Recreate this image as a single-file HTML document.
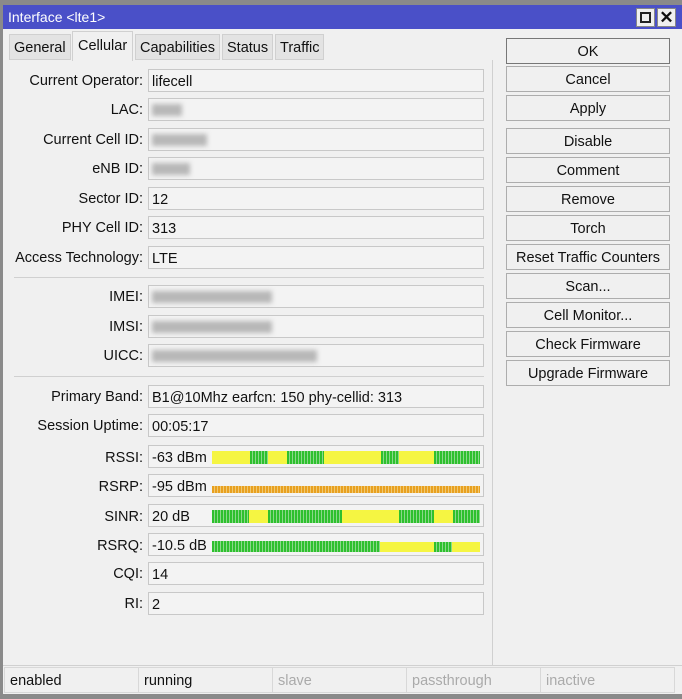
<!DOCTYPE html><html><head><style>
*{margin:0;padding:0;box-sizing:border-box}
body{width:682px;height:699px;background:#8a8a8a;font-family:"Liberation Sans",sans-serif;font-size:14.5px;color:#111;position:relative;overflow:hidden}
.a{position:absolute}
#win{left:3px;top:5px;width:679px;height:689px;background:#f0f0f0}
#title{left:3px;top:5px;width:679px;height:24px;background:#4a50c8;color:#fff;font-size:14px;padding:4px 0 0 5px}
.tb{top:8px;width:19px;height:19px;background:#f0f0f0;border:1px solid #888}
.tab{top:34px;height:26px;background:#e3e3e3;border:1px solid #d0d0d0;padding:5px 4px 0}
.lbl{width:143px;text-align:right;left:0;margin-top:1px}
.fld{left:148px;width:336px;height:23px;background:#f3f3f3;border:1px solid #c8c8c8;padding:4px 3px 0}
.blur{display:inline-block;width:60px;height:12px;margin-top:1px;background:#b8b8b8;filter:blur(2.5px)}
.sep{left:14px;width:470px;height:1px;background:#d0d0d0}
.btn{left:506px;width:164px;height:26px;background:#f0f0f0;border:1px solid #adadad;text-align:center;padding-top:5px}
.bar{position:absolute;top:5px;height:13px}
.g{background:repeating-linear-gradient(90deg,#2ec02e 0 2px,#8ad88a 2px 3px)}
.y{background:#f5f542}
.st{top:667px;height:26px;border:1px solid #d8d8d8;padding:5px 0 0 5px;width:135px}
</style></head><body>
<div id="win" class="a"></div>
<div id="title" class="a">Interface &lt;lte1&gt;</div>
<div class="a tb" style="left:636px"><div class="a" style="left:3px;top:3px;width:11px;height:11px;border:2px solid #222"></div></div>
<div class="a tb" style="left:657px;font-size:17px;font-weight:bold;text-align:center;line-height:17px">✕</div>

<div class="a tab" style="left:9px">General</div>
<div class="a" style="left:72px;top:31px;height:30px;background:#f0f0f0;border:1px solid #d0d0d0;border-bottom:none;padding:6px 5px 0">Cellular</div>
<div class="a tab" style="left:135px">Capabilities</div>
<div class="a tab" style="left:222px">Status</div>
<div class="a tab" style="left:275px">Traffic</div>
<div class="a" style="left:492px;top:60px;width:1px;height:605px;background:#d0d0d0"></div>

<div class="a lbl" style="top:72px">Current Operator:</div><div class="a fld" style="top:69px">lifecell</div>
<div class="a lbl" style="top:101px">LAC:</div><div class="a fld" style="top:98px"><span class="blur" style="width:30px"></span></div>
<div class="a lbl" style="top:131px">Current Cell ID:</div><div class="a fld" style="top:128px"><span class="blur" style="width:55px"></span></div>
<div class="a lbl" style="top:160px">eNB ID:</div><div class="a fld" style="top:157px"><span class="blur" style="width:38px"></span></div>
<div class="a lbl" style="top:190px">Sector ID:</div><div class="a fld" style="top:187px">12</div>
<div class="a lbl" style="top:219px">PHY Cell ID:</div><div class="a fld" style="top:216px">313</div>
<div class="a lbl" style="top:249px">Access Technology:</div><div class="a fld" style="top:246px">LTE</div>
<div class="a sep" style="top:277px"></div>
<div class="a lbl" style="top:288px">IMEI:</div><div class="a fld" style="top:285px"><span class="blur" style="width:120px"></span></div>
<div class="a lbl" style="top:318px">IMSI:</div><div class="a fld" style="top:315px"><span class="blur" style="width:120px"></span></div>
<div class="a lbl" style="top:347px">UICC:</div><div class="a fld" style="top:344px"><span class="blur" style="width:165px"></span></div>
<div class="a sep" style="top:376px"></div>
<div class="a lbl" style="top:388px">Primary Band:</div><div class="a fld" style="top:385px">B1@10Mhz earfcn: 150 phy-cellid: 313</div>
<div class="a lbl" style="top:417px">Session Uptime:</div><div class="a fld" style="top:414px">00:05:17</div>
<div class="a lbl" style="top:449px">RSSI:</div><div class="a fld" style="top:445px">-63 dBm
<div class="bar y" style="left:63px;width:38px"></div><div class="bar g" style="left:101px;width:18px"></div><div class="bar y" style="left:119px;width:19px"></div><div class="bar g" style="left:138px;width:37px"></div><div class="bar y" style="left:175px;width:57px"></div><div class="bar g" style="left:232px;width:18px"></div><div class="bar y" style="left:250px;width:35px"></div><div class="bar g" style="left:285px;width:46px"></div></div>
<div class="a lbl" style="top:478px">RSRP:</div><div class="a fld" style="top:474px">-95 dBm
<div class="bar" style="left:63px;width:268px;top:11px;height:7px;background:repeating-linear-gradient(90deg,#e8a020 0 2px,#f0c870 2px 3px)"></div></div>
<div class="a lbl" style="top:508px">SINR:</div><div class="a fld" style="top:504px">20 dB
<div class="bar g" style="left:63px;width:37px"></div><div class="bar y" style="left:100px;width:19px"></div><div class="bar g" style="left:119px;width:74px"></div><div class="bar y" style="left:193px;width:57px"></div><div class="bar g" style="left:250px;width:35px"></div><div class="bar y" style="left:285px;width:19px"></div><div class="bar g" style="left:304px;width:27px"></div></div>
<div class="a lbl" style="top:537px">RSRQ:</div><div class="a fld" style="top:533px">-10.5 dB
<div class="bar g" style="left:63px;width:168px;top:7px;height:11px"></div><div class="bar y" style="left:231px;width:54px;top:8px;height:10px"></div><div class="bar g" style="left:285px;width:18px;top:8px;height:10px"></div><div class="bar y" style="left:303px;width:28px;top:8px;height:10px"></div></div>
<div class="a lbl" style="top:565px">CQI:</div><div class="a fld" style="top:562px">14</div>
<div class="a lbl" style="top:595px">RI:</div><div class="a fld" style="top:592px">2</div>

<div class="a btn" style="top:38px;border-color:#777">OK</div>
<div class="a btn" style="top:66px">Cancel</div>
<div class="a btn" style="top:95px">Apply</div>
<div class="a btn" style="top:128px">Disable</div>
<div class="a btn" style="top:157px">Comment</div>
<div class="a btn" style="top:186px">Remove</div>
<div class="a btn" style="top:215px">Torch</div>
<div class="a btn" style="top:244px">Reset Traffic Counters</div>
<div class="a btn" style="top:273px">Scan...</div>
<div class="a btn" style="top:302px">Cell Monitor...</div>
<div class="a btn" style="top:331px">Check Firmware</div>
<div class="a btn" style="top:360px">Upgrade Firmware</div>

<div class="a" style="left:3px;top:665px;width:679px;height:1px;background:#d0d0d0"></div>
<div class="a st" style="left:4px">enabled</div>
<div class="a st" style="left:138px">running</div>
<div class="a st" style="left:272px;color:#aaa">slave</div>
<div class="a st" style="left:406px;color:#aaa">passthrough</div>
<div class="a st" style="left:540px;color:#aaa">inactive</div>
</body></html>
